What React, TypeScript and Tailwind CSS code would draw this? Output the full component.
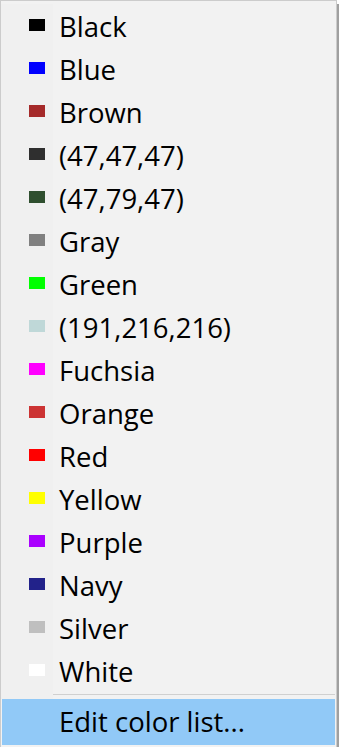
import React from "react";

type ColorItem = { label: string; color: string };

const colors: ColorItem[] = [
  { label: "Black", color: "#000000" },
  { label: "Blue", color: "#0000ff" },
  { label: "Brown", color: "#a52a2a" },
  { label: "(47,47,47)", color: "#2f2f2f" },
  { label: "(47,79,47)", color: "#2f4f2f" },
  { label: "Gray", color: "#808080" },
  { label: "Green", color: "#00ff00" },
  { label: "(191,216,216)", color: "#bfd8d8" },
  { label: "Fuchsia", color: "#ff00ff" },
  { label: "Orange", color: "#cc3333" },
  { label: "Red", color: "#ff0000" },
  { label: "Yellow", color: "#ffff00" },
  { label: "Purple", color: "#aa00ff" },
  { label: "Navy", color: "#22228a" },
  { label: "Silver", color: "#bfbfbf" },
  { label: "White", color: "#ffffff" },
];

function MenuRow({ item }: { item: ColorItem }) {
  return (
    <div className="flex h-[43px] items-center">
      {/* icon gutter */}
      <div className="flex h-full w-[52px] shrink-0 items-center bg-[#f0f0f0] pl-[28px]">
        <span className="h-[12px] w-[16px] -translate-y-[1px]" style={{ backgroundColor: item.color }} />
      </div>
      <span className="translate-y-[1px] pl-[6px] text-[27.5px] leading-none text-black">{item.label}</span>
    </div>
  );
}

export default function App() {
  return (
    <div className="min-h-screen w-full bg-white font-['Open_Sans','Noto_Sans',sans-serif]">
      <div className="flex w-[339px]">
        <div className="w-[337px] border border-b-0 border-[#cccccc] bg-[#f2f2f2] pt-[3px]">
          {colors.map((c) => (
            <MenuRow key={c.label} item={c} />
          ))}
          {/* separator */}
          <div className="flex">
            <div className="h-[7px] w-[52px] bg-[#f0f0f0]" />
            <div className="flex flex-1 items-center pr-[1px]">
              <div className="mt-[2px] mb-[4px] h-px w-full bg-[#d0d0d0]" />
            </div>
          </div>
          <div className="mx-[1px] flex h-[46px] items-center bg-[#91c9f7] pl-[57px] text-[27.5px] leading-none text-black">
            Edit color list...
          </div>
          <div className="h-[2px]" />
        </div>
        <div className="mt-[4px] w-[2px] bg-[#a0a0a0]" />
      </div>
    </div>
  );
}
